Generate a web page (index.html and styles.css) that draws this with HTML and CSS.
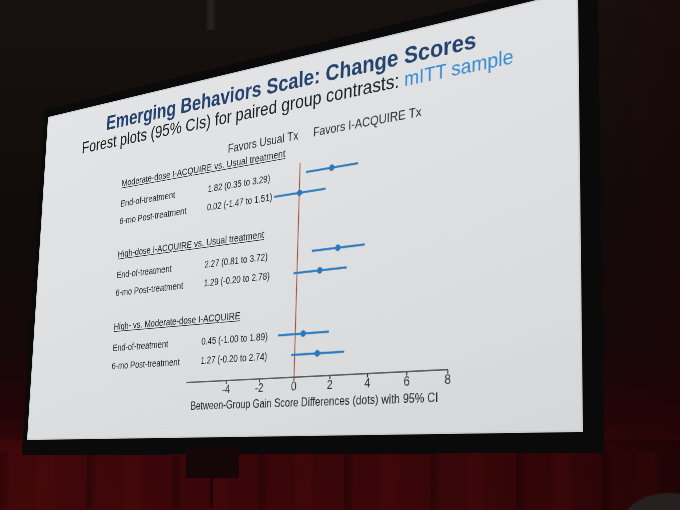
FILE: index.html
```html
<!DOCTYPE html>
<html lang="en">
<head>
<meta charset="utf-8">
<title>Emerging Behaviors Scale: Change Scores</title>
<link rel="stylesheet" href="styles.css">
</head>
<body>
<div class="stage">
  <div class="screen">
    <div class="slide">
      <h1 class="title">Emerging Behaviors Scale: Change Scores</h1>
      <p class="subtitle">Forest plots (95% CIs) for paired group contrasts: <span class="accent">mITT sample</span></p>
      <div class="favors">
        <span class="fav-left">Favors Usual Tx</span>
        <span class="fav-right">Favors I-ACQUIRE Tx</span>
      </div>
      <div class="plot">
        <svg class="chart" width="460" height="384" viewBox="0 0 460 384">
          <line class="zero" x1="197.5" y1="32" x2="197.5" y2="334"/>
          <g class="ci">
            <line x1="208.1" y1="46.75" x2="297.0" y2="46.75"/>
            <line x1="153.0" y1="75.25" x2="243.2" y2="75.25"/>
            <line x1="222.0" y1="160.75" x2="310.0" y2="160.75"/>
            <line x1="191.5" y1="189.25" x2="281.6" y2="189.25"/>
            <line x1="167.3" y1="274.75" x2="254.7" y2="274.75"/>
            <line x1="191.5" y1="303.25" x2="280.4" y2="303.25"/>
          </g>
          <g class="dots">
            <circle cx="252.6" cy="46.75" r="4.5"/>
            <circle cx="198.1" cy="75.25" r="4.5"/>
            <circle cx="266.2" cy="160.75" r="4.5"/>
            <circle cx="236.5" cy="189.25" r="4.5"/>
            <circle cx="211.1" cy="274.75" r="4.5"/>
            <circle cx="235.9" cy="303.25" r="4.5"/>
          </g>
          <g class="axis">
            <line x1="0" y1="334" x2="440" y2="334"/>
            <line x1="76.5" y1="334" x2="76.5" y2="339"/>
            <line x1="137" y1="334" x2="137" y2="339"/>
            <line x1="197.5" y1="334" x2="197.5" y2="339"/>
            <line x1="258" y1="334" x2="258" y2="339"/>
            <line x1="318.5" y1="334" x2="318.5" y2="339"/>
            <line x1="379" y1="334" x2="379" y2="339"/>
            <line x1="439.5" y1="334" x2="439.5" y2="339"/>
          </g>
          <g class="ticks">
            <text x="76.5" y="352">-4</text>
            <text x="137" y="352">-2</text>
            <text x="197.5" y="352">0</text>
            <text x="258" y="352">2</text>
            <text x="318.5" y="352">4</text>
            <text x="379" y="352">6</text>
            <text x="439.5" y="352">8</text>
          </g>
          <text class="axis-title" x="218" y="374">Between-Group Gain Score Differences (dots) with 95% CI</text>
        </svg>
        <div class="rows">
          <div class="group">
            <div class="heading">Moderate-dose I-ACQUIRE vs. Usual treatment</div>
            <div class="row"><span class="label">End-of-treatment</span><span class="value">1.82 (0.35 to 3.29)</span></div>
            <div class="row"><span class="label">6-mo Post-treatment</span><span class="value">0.02 (-1.47 to 1.51)</span></div>
          </div>
          <div class="group">
            <div class="heading">High-dose I-ACQUIRE vs. Usual treatment</div>
            <div class="row"><span class="label">End-of-treatment</span><span class="value">2.27 (0.81 to 3.72)</span></div>
            <div class="row"><span class="label">6-mo Post-treatment</span><span class="value">1.29 (-0.20 to 2.78)</span></div>
          </div>
          <div class="group">
            <div class="heading">High- vs. Moderate-dose I-ACQUIRE</div>
            <div class="row"><span class="label">End-of-treatment</span><span class="value">0.45 (-1.00 to 1.89)</span></div>
            <div class="row"><span class="label">6-mo Post-treatment</span><span class="value">1.27 (-0.20 to 2.74)</span></div>
          </div>
        </div>
      </div>
    </div>
  </div>
  <div class="pole"></div>
  <div class="mount"></div>
</div>
</body>
</html>
```

FILE: styles.css
```css
html, body {
  margin: 0;
  padding: 0;
  width: 680px;
  height: 510px;
  overflow: hidden;
  background: #100a0a;
}

body {
  font-family: "Liberation Sans", Arial, sans-serif;
}

/* the photographed room */
.stage {
  position: relative;
  width: 680px;
  height: 510px;
  overflow: hidden;
  background:
    radial-gradient(circle at 668px 552px, #262020 0 58px, rgba(38,32,32,0) 60px),
    repeating-linear-gradient(90deg, rgba(0,0,0,0.22) 0 5px, rgba(0,0,0,0) 10px 34px, rgba(110,18,20,0.10) 40px 52px, rgba(0,0,0,0) 58px 86px) 0 452px / 100% 60px no-repeat,
    linear-gradient(90deg, rgba(80,10,12,0.35) 0, rgba(0,0,0,0) 35%, rgba(0,0,0,0) 60%, rgba(0,0,0,0.25) 100%) 0 440px / 100% 70px no-repeat,
    linear-gradient(90deg, rgba(0,0,0,0) 85%, rgba(30,4,6,0.5) 100%),
    linear-gradient(180deg, #171110 0, #110b0a 40%, #150808 68%, #250507 82%, #380609 89%, #3a0608 100%);
}

/* projection screen with its black frame, seen at an angle */
.screen {
  width: 960px;
  border-style: solid;
  border-color: #0b0a0b;
  border-width: 14px 26px 24px 10px;
  transform-origin: 0 0;
  transform: matrix3d(0.3895, -0.12948, 0, -0.00028128, -0.041106, 0.56202, 0, -0.0000821, 0, 0, 1, 0, 48, 117, 0, 1) translate(-10px, -14px);
}

.slide {
  width: 960px;
  height: 540px;
  box-sizing: border-box;
  padding-top: 17px;
  display: flex;
  flex-direction: column;
  background: linear-gradient(165deg, #e3e4e6 0%, #dee0e2 45%, #d9dbdd 80%, #d4d6d8 100%);
  box-shadow: inset 0 0 0 2px #c9cbcd;
  color: #2b2b2b;
  filter: blur(0.45px);
}

.title {
  margin: 0;
  font-size: 33px;
  line-height: 36px;
  font-weight: 700;
  text-align: center;
  color: #24426d;
}

.subtitle {
  margin: 0;
  font-size: 28px;
  line-height: 30px;
  text-align: center;
  color: #1e1e1e;
}

.accent {
  color: #3a8ad2;
}

.favors {
  margin-top: 25px;
  display: grid;
  grid-template-columns: 533px 1fr;
  font-size: 18px;
  line-height: 18px;
  color: #333;
}

.fav-left {
  text-align: right;
}

.fav-right {
  padding-left: 26px;
}

.plot {
  display: grid;
  margin-left: 184px;
}

.chart,
.rows {
  grid-area: 1 / 1;
}

.chart {
  margin-left: 156px;
  overflow: visible;
}

.rows {
  width: 330px;
  display: flex;
  flex-direction: column;
  gap: 24.5px;
}

.group {
  display: flex;
  flex-direction: column;
}

.heading {
  height: 28.5px;
  line-height: 28.5px;
  font-size: 15.5px;
  text-decoration: underline;
  text-underline-offset: 2px;
  margin-bottom: 4px;
  white-space: nowrap;
  color: #232323;
}

.row {
  height: 28.5px;
  line-height: 28.5px;
  display: grid;
  grid-template-columns: 182px 1fr;
  white-space: nowrap;
}

.label {
  font-size: 15.5px;
  color: #262626;
}

.value {
  font-size: 14.5px;
  color: #262626;
}

.zero {
  stroke: #a24f36;
  stroke-width: 1.6;
}

.ci line {
  stroke: #2e7bbd;
  stroke-width: 3;
  stroke-linecap: butt;
}

.dots circle {
  fill: #2b78ba;
}

.axis line {
  stroke: #333;
  stroke-width: 1.6;
}

.ticks text {
  font-family: "Liberation Sans", Arial, sans-serif;
  font-size: 17px;
  fill: #303030;
  text-anchor: middle;
}

.axis-title {
  font-family: "Liberation Sans", Arial, sans-serif;
  font-size: 16px;
  fill: #262626;
  text-anchor: middle;
}

/* fixtures around the screen */
.mount {
  position: absolute;
  left: 186px;
  top: 447px;
  width: 53px;
  height: 31px;
  background: #150607;
}

.mount::after {
  content: "";
  position: absolute;
  left: 24px;
  top: 31px;
  width: 3px;
  height: 30px;
  background: #1d0506;
}

.pole {
  position: absolute;
  left: 206px;
  top: 0;
  width: 10px;
  height: 30px;
  background: linear-gradient(90deg, #1c1514, #2b2422 50%, #1a1312);
}
```
